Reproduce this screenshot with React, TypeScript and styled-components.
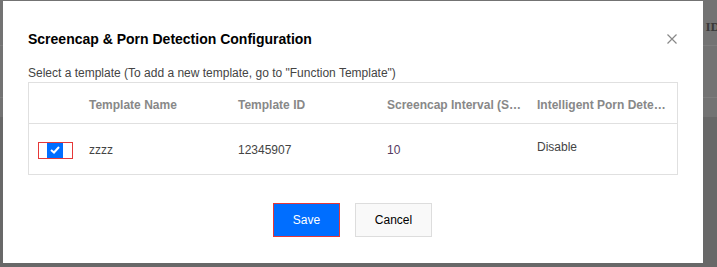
import React from "react";
import styled, { createGlobalStyle } from "styled-components";

const GlobalStyle = createGlobalStyle`
  html, body { margin: 0; padding: 0; }
  body {
    background: #696969;
    font-family: "Liberation Sans", Arial, sans-serif;
    width: 717px;
    height: 267px;
    overflow: hidden;
  }
`;

const Page = styled.div`
  position: relative;
  width: 717px;
  height: 267px;
  background: #686868;
`;

const BgHead = styled.div`
  height: 117px;
  background: #737373;
  display: flex;
  flex-direction: column;
`;

const BgRow = styled.div<{ $h: number }>`
  height: ${(p) => p.$h}px;
  border-bottom: 1px solid #7d7d7d;
  display: flex;
  align-items: center;
  justify-content: flex-end;
  padding-top: 8px;
  color: #3a3a3a;
  font-family: "Liberation Serif", serif;
  font-size: 13px;
  font-weight: bold;
  box-sizing: border-box;
`;

const BgLabel = styled.span`
  margin-right: -3px;
`;

const Modal = styled.div`
  position: absolute;
  left: 3px;
  top: 1px;
  width: 700px;
  height: 262px;
  background: #fff;
  box-sizing: border-box;
  padding: 28px 25px 0 25px;
  display: flex;
  flex-direction: column;
`;

const Header = styled.div`
  display: flex;
  align-items: center;
  justify-content: space-between;
  height: 20px;
`;

const Title = styled.h2`
  margin: 0;
  font-size: 14px;
  font-weight: bold;
  color: #000;
  line-height: 20px;
`;

const Close = styled.button`
  border: none;
  background: none;
  padding: 0;
  width: 10px;
  height: 10px;
  display: flex;
  margin-right: 1px;
  cursor: pointer;
`;

const Hint = styled.p`
  margin: 16px 0 0 0;
  font-size: 12px;
  line-height: 16px;
  color: #444;
`;

const Table = styled.div`
  margin-top: 1px;
  border: 1px solid #e0e0e0;
  width: 650px;
  box-sizing: border-box;
`;

const Row = styled.div<{ $head?: boolean }>`
  display: grid;
  grid-template-columns: 51px 149px 149px 150px 149px;
  height: ${(p) => (p.$head ? 41 : 50)}px;
  box-sizing: border-box;
  border-bottom: ${(p) => (p.$head ? "1px solid #e0e0e0" : "none")};
  align-items: center;
  font-size: 12px;
  color: ${(p) => (p.$head ? "#888" : "#444")};
  font-weight: ${(p) => (p.$head ? "bold" : "normal")};
`;

const Cell = styled.div<{ $dy?: number; $color?: string }>`
  padding-left: 9px;
  padding-right: 6px;
  white-space: nowrap;
  overflow: hidden;
  text-overflow: ellipsis;
  position: relative;
  top: ${(p) => p.$dy ?? 0}px;
  color: ${(p) => p.$color ?? "inherit"};
`;

const CheckCell = styled.div`
  padding-left: 9px;
  display: flex;
  align-items: center;
  position: relative;
  top: 1px;
`;

const CheckFocus = styled.label`
  width: 35px;
  height: 17px;
  border: 1px solid #e63838;
  box-sizing: border-box;
  display: flex;
  align-items: center;
  padding-left: 8px;
`;

const CheckBox = styled.span`
  width: 16px;
  height: 15px;
  background: #006eff;
  display: flex;
  align-items: center;
  justify-content: center;
`;

const Footer = styled.div`
  display: flex;
  justify-content: center;
  gap: 15px;
  margin-top: 28px;
  padding-right: 1px;
`;

const Button = styled.button<{ $primary?: boolean }>`
  height: 34px;
  min-width: ${(p) => (p.$primary ? 67 : 77)}px;
  box-sizing: border-box;
  font-family: inherit;
  font-size: 12px;
  border: 1px solid ${(p) => (p.$primary ? "#e63838" : "#ddd")};
  background: ${(p) => (p.$primary ? "#006eff" : "#f9f9f9")};
  color: ${(p) => (p.$primary ? "#fff" : "#000")};
  padding: 0 14px;
  cursor: pointer;
`;

export default function App() {
  return (
    <>
      <GlobalStyle />
      <Page>
        <BgHead>
          <BgRow $h={46}>
            <BgLabel>ID</BgLabel>
          </BgRow>
          <BgRow $h={52} />
        </BgHead>
        <Modal>
          <Header>
            <Title>Screencap &amp; Porn Detection Configuration</Title>
            <Close aria-label="close">
              <svg width="10" height="10" viewBox="0 0 10 10">
                <path d="M0.5 0.5 L9.5 9.5 M9.5 0.5 L0.5 9.5" stroke="#888" strokeWidth="1.2" />
              </svg>
            </Close>
          </Header>
          <Hint>Select a template (To add a new template, go to "Function Template")</Hint>
          <Table>
            <Row $head>
              <div />
              <Cell $dy={2}>Template Name</Cell>
              <Cell $dy={2}>Template ID</Cell>
              <Cell $dy={2}>Screencap Interval (Seconds)</Cell>
              <Cell $dy={2}>Intelligent Porn Detection</Cell>
            </Row>
            <Row>
              <CheckCell>
                <CheckFocus>
                  <CheckBox>
                    <svg width="10" height="8" viewBox="0 0 10 8">
                      <path d="M1 4 L4 6.5 L9 1" stroke="#fff" strokeWidth="2" fill="none" />
                    </svg>
                  </CheckBox>
                </CheckFocus>
              </CheckCell>
              <Cell $dy={1}>zzzz</Cell>
              <Cell $dy={1}>12345907</Cell>
              <Cell $dy={1} $color="#553a5f">10</Cell>
              <Cell $dy={-2}>Disable</Cell>
            </Row>
          </Table>
          <Footer>
            <Button $primary>Save</Button>
            <Button>Cancel</Button>
          </Footer>
        </Modal>
      </Page>
    </>
  );
}
